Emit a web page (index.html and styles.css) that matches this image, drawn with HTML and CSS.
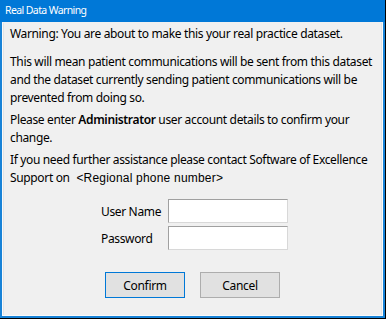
FILE: index.html
```html
<!DOCTYPE html>
<html lang="en">
<head>
<meta charset="UTF-8">
<meta name="viewport" content="width=device-width, initial-scale=1.0">
<title>Real Data Warning</title>
<link rel="stylesheet" href="styles.css">
</head>
<body>

<div class="window">
  <div class="title-bar">Real Data Warning</div>
  <div class="content">
    <p class="first">Warning: You are about to make this your real practice dataset.</p>
    <p>This will mean patient communications will be sent from this dataset and the dataset currently sending patient communications will be prevented from doing so.</p>
    <p>Please enter <b>Administrator</b> user account details to confirm your change.</p>
    <p>If you need further assistance please contact Software of Excellence Support on <span class="phone">&lt;Regional phone number&gt;</span></p>

    <div class="login">
      <div class="field">
        <label for="userName">User Name</label>
        <input type="text" id="userName">
      </div>
      <div class="field">
        <label for="password">Password</label>
        <input type="password" id="password">
      </div>
    </div>

    <div class="btn-group">
      <button class="default">Confirm</button>
      <button>Cancel</button>
    </div>
  </div>
</div>

</body>
</html>
```

FILE: styles.css
```css
html, body {
  margin: 0;
  padding: 0;
  width: 386px;
  height: 319px;
  overflow: hidden;
  background-color: #f0f0f0;
}
.window {
  box-sizing: border-box;
  width: 386px;
  height: 319px;
  background-color: #1883d7;
  border-right: 1px solid #000;
  border-bottom: 1px solid #000;
  padding: 0 2px 2px 2px;
  display: flex;
  flex-direction: column;
  font-family: "Noto Sans", sans-serif;
  color: #000;
}
.title-bar {
  height: 22px;
  line-height: 21px;
  margin: 0 -2px;
  padding-left: 5px;
  color: #fff;
  font-size: 10.5px;
  letter-spacing: -0.6px;
  background-color: #0078d7;
}
.content {
  flex: 1;
  background-color: #f0f0f0;
  border: 1px solid #fafafa;
  border-top-color: #f0f0f0;
  box-shadow: inset 1px 0 0 #e3e3e3, inset -1px 0 0 #e3e3e3;
  padding: 2px 7px 0 7px;
  font-size: 12px;
  line-height: 18px;
  letter-spacing: -0.35px;
}
p {
  margin: 0 0 4px 0;
}
p.first {
  margin-bottom: 10px;
}
b {
  font-weight: 600;
}
.phone {
  font-family: "Liberation Sans", Arial, sans-serif;
  font-size: 12px;
  letter-spacing: 0.2px;
  margin-left: 4px;
}
.login {
  margin-top: 12px;
  display: flex;
  flex-direction: column;
  gap: 3px;
  padding-left: 91px;
}
.field {
  display: flex;
  align-items: center;
}
.field label {
  width: 67px;
  padding-top: 2px;
}
.field input {
  box-sizing: border-box;
  width: 120px;
  height: 24px;
  border: 1px solid #a0a0a0;
  border-right-color: #d8d8d8;
  border-bottom-color: #d8d8d8;
  background-color: #fff;
  margin: 0;
}
.btn-group {
  margin-top: 22px;
  display: flex;
  gap: 15px;
  padding-left: 95px;
}
button {
  box-sizing: border-box;
  width: 80px;
  height: 26px;
  background-color: #e1e1e1;
  border: 1px solid #adadad;
  font-family: "Noto Sans", sans-serif;
  font-size: 12px;
  letter-spacing: -0.3px;
  color: #000;
  padding: 0;
}
button.default {
  border-color: #0078d7;
  box-shadow: inset 0 0 0 1px #e1e1e1;
}
```
